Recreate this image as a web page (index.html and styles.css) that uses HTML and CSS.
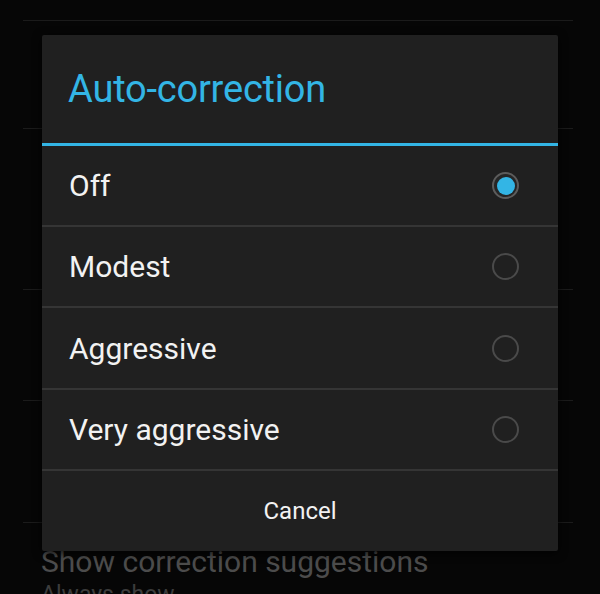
FILE: index.html
```html
<!DOCTYPE html>
<html lang="en">
<head>
<meta charset="UTF-8" />
<title>Auto-correction</title>
<link rel="stylesheet" href="styles.css">
</head>
<body>
<!-- settings list behind the dialog -->
<div class="settings">
  <div class="pref" style="height:21px"></div>
  <div class="pref" style="height:108px"></div>
  <div class="pref" style="height:161px"></div>
  <div class="pref" style="height:111px"></div>
  <div class="pref" style="height:122px"></div>
  <div class="pref last">
    <div class="pref-title">Show correction suggestions</div>
    <div class="pref-sub">Always show</div>
  </div>
</div>

<!-- dialog -->
<div class="dialog">
  <div class="dialog-title">Auto-correction</div>
  <div class="choices">
    <div class="choice"><span>Off</span><span class="radio checked"></span></div>
    <div class="choice"><span>Modest</span><span class="radio"></span></div>
    <div class="choice tall"><span>Aggressive</span><span class="radio"></span></div>
    <div class="choice"><span>Very aggressive</span><span class="radio"></span></div>
  </div>
  <div class="dialog-btn">Cancel</div>
</div>
</body>
</html>
```

FILE: styles.css
```css
html, body {
  margin: 0;
  padding: 0;
  height: 100%;
  background: #060606;
  font-family: Roboto, "Noto Sans", sans-serif;
  overflow: hidden;
}

.settings {
  padding: 0 27px 0 23px;
}

.pref {
  border-bottom: 1px solid #1b1b1b;
  box-sizing: border-box;
}

.pref.last {
  border-bottom: none;
  padding: 22px 0 0 18px;
}

.pref-title {
  font-size: 30px;
  color: #4c4c4c;
  line-height: 34px;
}

.pref-sub {
  font-size: 23px;
  color: #3c3c3c;
  line-height: 32px;
}

.dialog {
  position: absolute;
  left: 42px;
  top: 35px;
  width: 516px;
  background: #202020;
  border-radius: 2px;
  box-shadow: 0 2px 10px rgba(0,0,0,0.8);
}

.dialog-title {
  height: 111px;
  padding: 0 0 1px 26px;
  display: flex;
  align-items: center;
  font-size: 38px;
  letter-spacing: -0.2px;
  color: #33b5e5;
  border-bottom: 3px solid #33b5e5;
  box-sizing: border-box;
}

.choice {
  height: 81px;
  display: flex;
  align-items: center;
  justify-content: space-between;
  padding: 0 39px 0 27px;
  font-size: 30px;
  color: #f2f2f2;
  border-bottom: 2px solid #353535;
  box-sizing: border-box;
}

.choice.tall {
  height: 82px;
}

.radio {
  width: 27px;
  height: 27px;
  border-radius: 50%;
  border: 2px solid #4a4a4a;
  box-sizing: border-box;
  display: flex;
  align-items: center;
  justify-content: center;
}

.radio.checked {
  border-color: #5c5c5c;
  background: #262626;
}

.radio.checked::after {
  content: "";
  width: 18px;
  height: 18px;
  border-radius: 50%;
  background: #33b5e5;
}

.dialog-btn {
  height: 80px;
  display: flex;
  align-items: center;
  justify-content: center;
  font-size: 24px;
  color: #f2f2f2;
}
```
